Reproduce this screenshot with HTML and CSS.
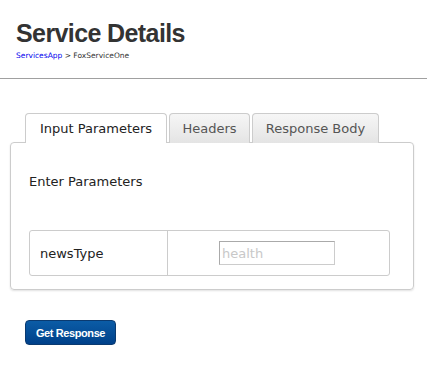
FILE: index.html
```html
<!DOCTYPE html>
<html lang="en">
<head>
    <meta charset="UTF-8">
    <title>Service Details</title>
    <link rel="stylesheet" href="styles.css">
</head>
<body>
    <div class="page-header">
        <h1>Service Details</h1>
        <div class="crumbs"><a href="#">ServicesApp</a> &gt; FoxServiceOne</div>
    </div>
    <hr class="divider">

    <div class="content">
        <ul class="tabs">
            <li class="tab tab-input active">Input Parameters</li>
            <li class="tab tab-headers">Headers</li>
            <li class="tab tab-body">Response Body</li>
        </ul>
        <div class="panel">
            <p class="panel-title">Enter Parameters</p>
            <table class="params">
                <tr>
                    <td class="param-name">newsType</td>
                    <td class="param-value"><input type="text" placeholder="health"></td>
                </tr>
            </table>
        </div>
        <button type="button" class="btn">Get Response</button>
    </div>
</body>
</html>
```

FILE: styles.css
```css
* {
    box-sizing: border-box;
}

body {
    margin: 0;
    font-family: "DejaVu Sans", Verdana, sans-serif;
    color: #333;
    background: #fff;
}

.page-header {
    padding: 18px 16px 0;
    height: 78px;
}

.page-header h1 {
    margin: 0;
    font-family: "Liberation Sans", Arial, sans-serif;
    font-size: 25px;
    letter-spacing: -0.6px;
    font-weight: bold;
    color: #333;
    line-height: 30px;
}

.crumbs {
    margin-top: 3px;
    font-size: 7.5px;
    color: #333;
}

.crumbs a {
    color: #0000ee;
    text-decoration: none;
}

.divider {
    margin: 0;
    border: none;
    border-top: 1px solid #a0a0a0;
}

.content {
    padding: 34px 13px 0 10px;
}

.tabs {
    display: flex;
    gap: 2px;
    list-style: none;
    margin: 0 0 -1px 15px;
    padding: 0;
}

.tab {
    height: 30px;
    line-height: 29px;
    text-align: center;
    font-size: 13px;
    color: #555;
    border: 1px solid #ccc;
    border-bottom: none;
    border-radius: 4px 4px 0 0;
    background: linear-gradient(#f6f6f6, #e4e4e4);
}

.tab-input {
    width: 142px;
}

.tab-headers {
    width: 81px;
}

.tab-body {
    width: 127px;
}

.tab.active {
    position: relative;
    z-index: 1;
    background: #fff;
    color: #222;
}

.panel {
    border: 1px solid #ccc;
    border-radius: 4px;
    box-shadow: 0 1px 2px rgba(0, 0, 0, 0.12);
    padding: 31px 23px 13px 18px;
}

.panel-title {
    margin: 0 0 40px 0;
    font-size: 13px;
    line-height: 16px;
    color: #222;
}

.params {
    width: 100%;
    border-collapse: separate;
    border-spacing: 0;
    border: 1px solid #ccc;
    border-radius: 3px;
}

.params td {
    height: 44px;
    font-size: 13px;
    color: #222;
}

.param-name {
    width: 138px;
    padding-left: 10px;
    border-right: 1px solid #ccc;
}

.param-value {
    padding-left: 51px;
}

.param-value input {
    width: 116px;
    height: 24px;
    padding: 0 2px;
    border: 1px solid #ccc;
    border-top-color: #aaa;
    border-left-color: #aaa;
    font-family: "DejaVu Sans", Verdana, sans-serif;
    font-size: 13px;
}

.param-value input::placeholder {
    color: #c8c8c8;
}

.btn {
    margin: 30px 0 0 15px;
    width: 91px;
    height: 25px;
    padding: 0;
    font-family: "Liberation Sans", Arial, sans-serif;
    font-size: 11px;
    letter-spacing: -0.4px;
    font-weight: bold;
    color: #fff;
    border: 1px solid #0a3a70;
    border-radius: 4px;
    background: linear-gradient(#0b5ca6, #00418a);
    cursor: pointer;
}
```
